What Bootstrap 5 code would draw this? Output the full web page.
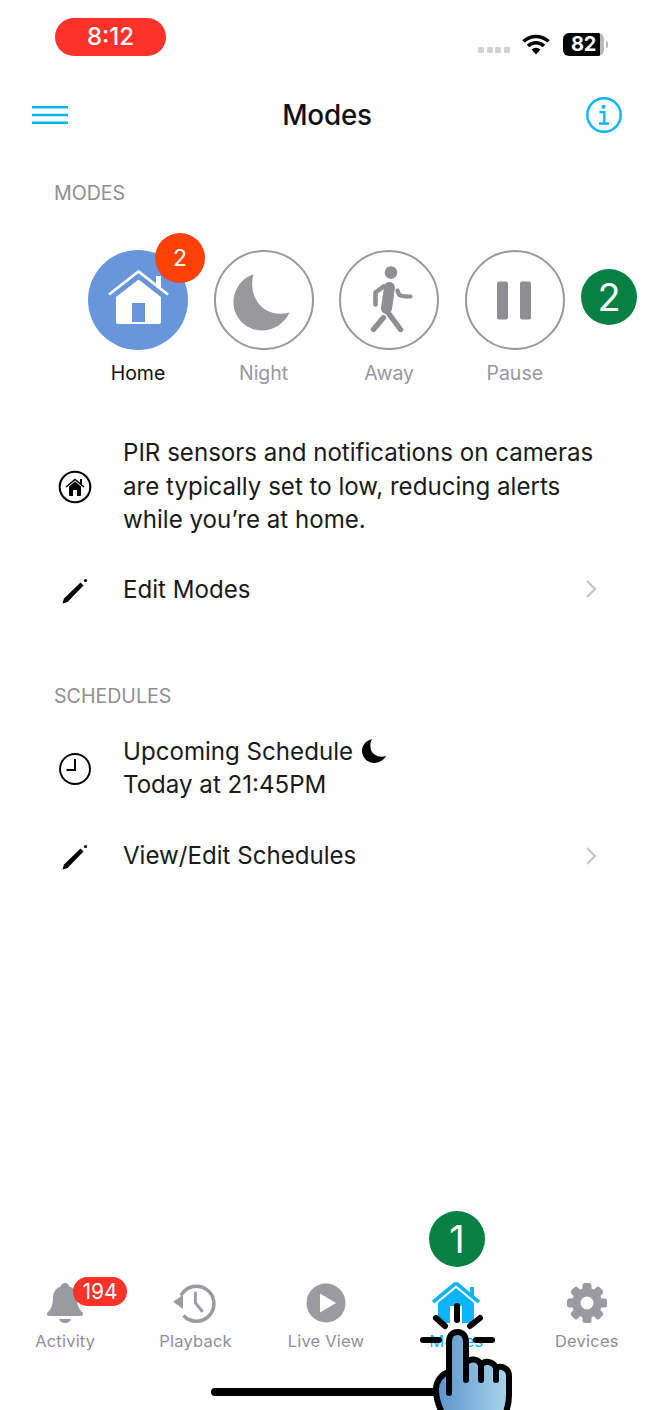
<!DOCTYPE html>
<html lang="en">
<head>
<meta charset="UTF-8">
<meta name="viewport" content="width=device-width, initial-scale=1.0">
<title>Modes</title>
<link href="https://cdn.jsdelivr.net/npm/bootstrap@5.3.0/dist/css/bootstrap.min.css" rel="stylesheet">
<style>
    /* --- Page --- */
    body { margin: 0; background: #fff; font-family: Inter, "Liberation Sans", sans-serif; color: #111; }
    .phone { width: 652px; height: 1410px; overflow: hidden; }

    /* --- Status bar --- */
    .status-row { height: 88px; padding: 18px 48px 0 55px; }
    .time-pill { width: 111px; height: 38px; border-radius: 19px; background: #fe3229; color: #fff; font-size: 24px; font-weight: 500; line-height: 38px; text-align: center; }
    .status-right { margin-top: 14px; height: 24px; }
    .signal-dots { width: 32px; margin-right: 12px; margin-top: 12px; }
    .signal-dots i { width: 6px; height: 6px; border-radius: 1.5px; background: #d1d1d6; }
    .battery { position: relative; width: 41px; height: 23px; margin-left: 13px; border-radius: 6px; background: linear-gradient(to right, #000 90%, #b9b9bd 90%); color: #fff; font-size: 20px; font-weight: 700; line-height: 23px; text-align: center; letter-spacing: -.3px; }
    .battery::after { content: ""; position: absolute; right: -4px; top: 8px; width: 2px; height: 7px; border-radius: 0 2px 2px 0; background: #b9b9bd; }

    /* --- Header --- */
    .top-nav { height: 54px; padding: 0 30px 0 32px; }
    .top-title { font-size: 27.800px; font-weight: 500; letter-spacing: -.2px; padding: 2px 0 0 2px; }

    /* --- Section labels --- */
    .sect-label { margin: 39px 0 0 54px; font-size: 19.600px; line-height: 24px; color: #8e8e93; }
    .sect-label.second { margin-top: 78px; }

    /* --- Mode buttons --- */
    .mode-strip { margin-top: 45px; padding-left: 88px; gap: 25.6px; }
    .mode-item { width: 100px; }
    .mode-circle { width: 100px; height: 100px; border: 2.5px solid #98989d; border-radius: 50%; }
    .mode-circle.on { background: #6896dc; border: 0; }
    .mode-name { margin-top: 11px; margin-left: -10px; margin-right: -10px; font-size: 19.500px; line-height: 24px; text-align: center; color: #98989d; }
    .mode-name.on { color: #111; }
    .count-dot { top: -17px; right: -17px; width: 50px; height: 50px; border-radius: 50%; background: #fd4106; color: #fff; font-size: 23px; line-height: 50px; text-align: center; }
    .step-dot { width: 56px; height: 56px; border-radius: 50%; background: #068043; color: #fff; font-size: 38px; line-height: 56px; text-align: center; }
    .step-two { left: 581px; top: 269px; }
    .step-one { left: 429px; top: 1211px; }

    /* --- List rows --- */
    .info-list { padding: 0 55px 0 54px; }
    .info-row { font-size: 24.100px; line-height: 33.5px; background: none; color: #1a1a1a; }
    .info-icon { width: 42px; margin-right: 27px; }
    .gap-desc { margin-top: 51px; }
    .gap-edit { margin-top: 36px; }
    .gap-next { margin-top: 26.5px; }
    .gap-view { margin-top: 37.5px; }

    /* --- Tab bar --- */
    .tab-slot { height: 129px; }
    .tab-icon { height: 44px; }
    .tab-name { margin-top: 5px; font-size: 16.5px; line-height: 22px; color: #8e8e99; letter-spacing: .2px; }
    .tab-name.on { color: #0ab4ff; }
    .bell-count { left: 73px; top: 1277px; width: 54px; height: 29px; border-radius: 15px; background: #fe3229; color: #fff; font-size: 21px; line-height: 29px; text-align: center; }
    .home-bar { left: 211px; top: 1388px; width: 240px; height: 8px; border-radius: 4px; background: #000; }
    .hand-over { left: 420px; top: 1295px; }
</style>
</head>
<body>
<div class="phone position-relative d-flex flex-column">

    <!-- Status bar -->
    <div class="status-row d-flex justify-content-between align-items-start">
        <div class="time-pill">8:12</div>
        <div class="status-right d-flex align-items-center">
            <div class="signal-dots d-flex justify-content-between"><i></i><i></i><i></i><i></i></div>
            <svg width="28" height="21" viewBox="0 0 28 21"><g fill="none" stroke="#000" stroke-width="3.4"><path d="M1.5 7.5a18 18 0 0 1 25 0"/><path d="M6 12a11.5 11.5 0 0 1 16 0"/></g><path d="M9.6 15.6a6.3 6.3 0 0 1 8.8 0L14 20.5z"/></svg>
            <div class="battery">82</div>
        </div>
    </div>

    <!-- Header -->
    <div class="top-nav d-flex justify-content-between align-items-center position-relative">
        <svg width="36" height="18" viewBox="0 0 36 18"><path d="M0 1.2h36M0 9h36M0 16.800h36" stroke="#0ab4ff" stroke-width="2.4"/></svg>
        <div class="top-title position-absolute top-50 start-50 translate-middle">Modes</div>
        <svg width="36" height="36" viewBox="0 0 36 36"><circle cx="18" cy="18" r="16.700" fill="none" stroke="#0ab4ff" stroke-width="2.4"/><circle cx="17.500" cy="9.800" r="2.100" fill="#0ab4ff"/><path d="M13.500 15.200h4.800v11.200M13 26.500h10" fill="none" stroke="#0ab4ff" stroke-width="2.300"/></svg>
    </div>

    <div class="sect-label">MODES</div>

    <!-- Mode buttons -->
    <div class="mode-strip d-flex">
        <div class="mode-item">
            <div class="mode-circle on position-relative">
                <svg width="100" height="100" viewBox="0 0 100 100">
                    <path d="M28 47V72a2 2 0 0 0 2 2H71a2 2 0 0 0 2-2V47L50.500 29.500z" fill="#fff"/>
                    <path d="M68 37V26h5v15z" fill="#fff"/>
                    <path d="M21 44.500 50.500 21.500 80 44.500" fill="none" stroke="#fff" stroke-width="2.800"/>
                    <rect x="44" y="53" width="13" height="19" fill="#6896dc"/>
                </svg>
                <div class="count-dot position-absolute">2</div>
            </div>
            <div class="mode-name on">Home</div>
        </div>
        <div class="mode-item">
            <div class="mode-circle d-flex align-items-center justify-content-center">
                <svg width="95" height="95" viewBox="2.500 2.500 95 95"><path d="M40 24C26 28 20 42 20 52C20 68 34 80 48 80C60 80 71 73 76 62C61 66 48 60 42 48C38 40 38 32 40 24Z" fill="#98989d"/></svg>
            </div>
            <div class="mode-name">Night</div>
        </div>
        <div class="mode-item">
            <div class="mode-circle d-flex align-items-center justify-content-center">
                <svg width="95" height="95" viewBox="2.500 2.500 95 95">
                    <circle cx="51.500" cy="22" r="6.300" fill="#8e8e93"/>
                    <path d="M50 37 47 58" stroke="#8e8e93" stroke-width="11" stroke-linecap="round" fill="none"/>
                    <path d="M44 36 36 42 36 54" stroke="#8e8e93" stroke-width="4.600" stroke-linecap="round" stroke-linejoin="round" fill="none"/>
                    <path d="M58 40C59 45 60 46 71 46" stroke="#8e8e93" stroke-width="4.200" stroke-linecap="round" fill="none"/>
                    <path d="M47 60 61 79" stroke="#8e8e93" stroke-width="5.400" stroke-linecap="round" fill="none"/>
                    <path d="M44 67 34 79" stroke="#8e8e93" stroke-width="5.400" stroke-linecap="round" fill="none"/>
                </svg>
            </div>
            <div class="mode-name">Away</div>
        </div>
        <div class="mode-item">
            <div class="mode-circle d-flex align-items-center justify-content-center">
                <svg width="95" height="95" viewBox="2.500 2.500 95 95"><rect x="32.500" y="31" width="11" height="38" rx="2" fill="#8e8e93"/><rect x="55.500" y="31" width="11" height="38" rx="2" fill="#8e8e93"/></svg>
            </div>
            <div class="mode-name">Pause</div>
        </div>
    </div>

    <!-- Mode description -->
    <div class="list-group list-group-flush info-list">
        <div class="list-group-item info-row gap-desc border-0 p-0 d-flex align-items-center">
            <div class="info-icon flex-shrink-0 text-center">
                <svg width="34" height="34" viewBox="0 0 34 34"><circle cx="17" cy="17" r="15.300" fill="none" stroke="#000" stroke-width="2.100"/><path d="M11 16.500v8.500a1 1 0 0 0 1 1h10a1 1 0 0 0 1-1v-8.500l-6-5z" fill="#000"/><path d="M22 9v4l2 2V9z" fill="#000"/><path d="M8 17 17 9.500l9 7.500" fill="none" stroke="#000" stroke-width="1.600"/><rect x="15" y="20" width="4" height="6" fill="#fff"/></svg>
            </div>
            <div>PIR sensors and notifications on cameras are typically set to low, reducing alerts while you’re at home.</div>
        </div>
        <div class="list-group-item info-row gap-edit border-0 p-0 d-flex align-items-center">
            <div class="info-icon flex-shrink-0 text-center">
                <svg width="28" height="28" viewBox="0 0 28 28"><path d="M1.500 26.500 3 21.500 19.500 5.500 22.500 8.500 6.500 25z" fill="#000"/><circle cx="24.500" cy="3.500" r="1.600" fill="#000"/></svg>
            </div>
            <div class="flex-grow-1">Edit Modes</div>
            <svg width="12" height="20" viewBox="0 0 12 20"><path d="M2 2l8 8-8 8" fill="none" stroke="#c7c7cc" stroke-width="2.400"/></svg>
        </div>
    </div>

    <div class="sect-label second">SCHEDULES</div>

    <div class="list-group list-group-flush info-list">
        <div class="list-group-item info-row gap-next border-0 p-0 d-flex align-items-center">
            <div class="info-icon flex-shrink-0 text-center">
                <svg width="34" height="34" viewBox="0 0 34 34"><circle cx="17" cy="17" r="15" fill="none" stroke="#000" stroke-width="1.900"/><path d="M17 7v11H8.500" fill="none" stroke="#000" stroke-width="1.900"/></svg>
            </div>
            <div>
                <div class="d-flex align-items-center">Upcoming Schedule
                    <svg class="ms-2" width="26" height="26" viewBox="0 0 26 26"><path d="M11 1C4 3 1 8 1 13C1 20 7 25 13 25C18 25 23 22 25 18C18 20 12 17 10 12C9 8 9 5 11 1Z" fill="#000"/></svg>
                </div>
                <div>Today at 21:45PM</div>
            </div>
        </div>
        <div class="list-group-item info-row gap-view border-0 p-0 d-flex align-items-center">
            <div class="info-icon flex-shrink-0 text-center">
                <svg width="28" height="28" viewBox="0 0 28 28"><path d="M1.500 26.500 3 21.500 19.500 5.500 22.500 8.500 6.500 25z" fill="#000"/><circle cx="24.500" cy="3.500" r="1.600" fill="#000"/></svg>
            </div>
            <div class="flex-grow-1">View/Edit Schedules</div>
            <svg width="12" height="20" viewBox="0 0 12 20"><path d="M2 2l8 8-8 8" fill="none" stroke="#c7c7cc" stroke-width="2.400"/></svg>
        </div>
    </div>

    <!-- Tab bar -->
    <div class="row g-0 mt-auto text-center">
        <div class="col tab-slot">
            <div class="tab-icon d-flex justify-content-center align-items-center">
                <svg width="38" height="42" viewBox="0 0 38 42"><path d="M19 1c-2.500 0-4 1.500-4.300 3.600C9.500 6.500 7 10.500 7 16c0 7-2 11-5.300 14.300-1.500 1.500-.6 3.700 1.500 3.700h31.600c2.100 0 3-2.200 1.500-3.700C33 27 31 23 31 16c0-5.500-2.500-9.500-7.700-11.400C23 2.500 21.500 1 19 1z" fill="#9a9aa3"/><path d="M13 37h12c-.7 2.500-3 4-6 4s-5.300-1.500-6-4z" fill="#9a9aa3"/></svg>
            </div>
            <div class="tab-name">Activity</div>
        </div>
        <div class="col tab-slot">
            <div class="tab-icon d-flex justify-content-center align-items-center">
                <svg width="46" height="42" viewBox="0 0 46 42"><path d="M8 13.500A17.500 17.500 0 1 1 10.500 33.500" fill="none" stroke="#9a9aa3" stroke-width="3.500"/><path d="M0 19.700 10 13V27z" fill="#9a9aa3"/><path d="M22.400 11V21L29 29" fill="none" stroke="#9a9aa3" stroke-width="2.800" stroke-linecap="round"/></svg>
            </div>
            <div class="tab-name">Playback</div>
        </div>
        <div class="col tab-slot">
            <div class="tab-icon d-flex justify-content-center align-items-center">
                <svg width="40" height="40" viewBox="0 0 40 40"><circle cx="20" cy="20" r="19.500" fill="#9a9aa3"/><path d="M14 10.500 30 20 14 29.500z" fill="#fff"/></svg>
            </div>
            <div class="tab-name">Live View</div>
        </div>
        <div class="col tab-slot">
            <div class="tab-icon d-flex justify-content-center align-items-center">
                <svg width="48" height="42" viewBox="0 0 48 42"><path d="M24 1 1 20M24 1 47 20" stroke="#0ab4ff" stroke-width="3.600" fill="none"/><path d="M38 5h4v10l-4-3z" fill="#0ab4ff"/><path d="M6 21 24 6l18 15v20H6z" fill="#0ab4ff"/><rect x="18" y="24" width="12" height="17" fill="#fff"/></svg>
            </div>
            <div class="tab-name on">Modes</div>
        </div>
        <div class="col tab-slot">
            <div class="tab-icon d-flex justify-content-center align-items-center">
                <svg width="40" height="40" viewBox="0 0 40 40"><g fill="#9a9aa3"><circle cx="20" cy="20" r="15"/><g><rect x="15.500" y="0" width="9" height="40" rx="2.500"/><rect x="15.500" y="0" width="9" height="40" rx="2.500" transform="rotate(45 20 20)"/><rect x="15.500" y="0" width="9" height="40" rx="2.500" transform="rotate(90 20 20)"/><rect x="15.500" y="0" width="9" height="40" rx="2.500" transform="rotate(135 20 20)"/></g></g><circle cx="20" cy="20" r="6.500" fill="#fff"/></svg>
            </div>
            <div class="tab-name">Devices</div>
        </div>
    </div>

    <!-- Things lying over the page -->
    <div class="bell-count position-absolute">194</div>
    <div class="step-dot step-two position-absolute">2</div>
    <div class="step-dot step-one position-absolute">1</div>
    <div class="home-bar position-absolute"></div>
    <svg class="hand-over position-absolute" width="100" height="115" viewBox="420 1295 100 115">
        <defs><linearGradient id="handFill" x1="0" y1="0" x2="1" y2="0"><stop offset="0" stop-color="#5a93cd"/><stop offset="1" stop-color="#aad6ea"/></linearGradient></defs>
        <path d="M443 1415C438 1405 436 1398 436 1390C436 1380 442 1374 449 1372V1342C449 1336 452 1332 457.500 1332C463 1332 466 1336 466 1342V1363C470 1358 478 1358 481 1365C485 1360 493 1361 496 1368C501 1365 509 1368 509 1376V1395C509 1403 507 1410 505 1415Z" fill="url(#handFill)" stroke="#000" stroke-width="6" stroke-linejoin="round"/>
        <g fill="none" stroke="#000" stroke-width="6" stroke-linecap="round">
            <path d="M449 1372V1393M466 1362V1380M481 1366V1380M496 1369V1380"/>
            <path d="M457 1306V1320M436 1318l9 8M480 1318l-10 8M423 1340h16M476 1340h16"/>
        </g>
    </svg>
</div>
<script src="https://cdn.jsdelivr.net/npm/bootstrap@5.3.0/dist/js/bootstrap.bundle.min.js"></script>
</body>
</html>
